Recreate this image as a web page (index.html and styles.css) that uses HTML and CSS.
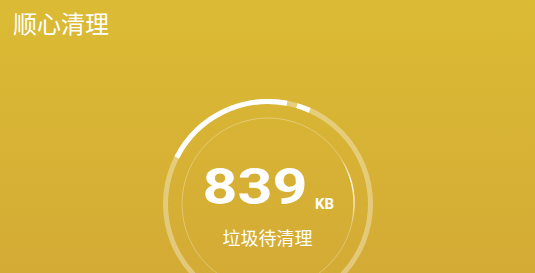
FILE: index.html
```html
<!DOCTYPE html>
<html lang="zh-CN">
<head>
<meta charset="utf-8">
<title>顺心清理</title>
<link rel="stylesheet" href="styles.css">
</head>
<body>
<div class="page">
  <header class="header">顺心清理</header>
  <main class="gauge">
    <svg class="rings" viewBox="0 0 210 210" width="210" height="210">
      <defs>
        <linearGradient id="glow" gradientUnits="userSpaceOnUse" x1="0" y1="58" x2="0" y2="126">
          <stop offset="0" stop-color="#fff" stop-opacity="0"/>
          <stop offset="0.35" stop-color="#fff" stop-opacity="0.85"/>
          <stop offset="0.7" stop-color="#fff" stop-opacity="0.6"/>
          <stop offset="1" stop-color="#fff" stop-opacity="0"/>
        </linearGradient>
      </defs>
      <circle cx="105" cy="105" r="102.5" fill="none" stroke="#fff" stroke-opacity="0.35" stroke-width="5"/>
      <path d="M13.7 58.5 A102.5 102.5 0 0 1 124 4.3" fill="none" stroke="#fff" stroke-width="5"/>
      <path d="M133.9 6.7 A102.5 102.5 0 0 1 146.7 11.4" fill="none" stroke="#fff" stroke-width="5"/>
      <circle cx="105" cy="105" r="86" fill="none" stroke="#fff" stroke-opacity="0.3" stroke-width="1"/>
      <path d="M178.7 60.7 A86 86 0 0 1 188.8 124.4" fill="none" stroke="url(#glow)" stroke-width="1.4"/>
    </svg>
    <div class="readout">
      <div class="amount"><span class="num">839</span><span class="unit">KB</span></div>
      <div class="caption">垃圾待清理</div>
    </div>
  </main>
</div>
</body>
</html>
```
FILE: styles.css
```css
html, body {
  margin: 0;
  padding: 0;
  width: 535px;
  height: 273px;
  overflow: hidden;
}
body {
  background: linear-gradient(180deg, #dbbb34 0%, #d4ab35 100%);
  color: #fff;
  font-family: "Noto Sans CJK SC", "Noto Sans", sans-serif;
}
.page {
  display: flex;
  flex-direction: column;
}
.header {
  padding: 11px 0 0 13px;
  font-size: 24px;
  line-height: 24px;
  font-weight: 400;
}
.gauge {
  margin: 64px auto 0;
  width: 210px;
  height: 210px;
  display: grid;
}
.rings, .readout {
  grid-area: 1 / 1;
}
.rings {
  display: block;
}
.readout {
  display: flex;
  flex-direction: column;
  align-items: center;
  padding-top: 63px;
}
.amount {
  display: flex;
  align-items: baseline;
  justify-content: center;
  height: 50px;
  font-family: Roboto, "Liberation Sans", sans-serif;
  font-weight: 700;
  padding-left: 1px;
}
.num {
  display: inline-block;
  font-size: 50px;
  line-height: 50px;
  transform: scaleX(1.22);
  margin: 0 10px;
}
.unit {
  font-size: 15px;
  line-height: 15px;
  margin-left: 7px;
  position: relative;
  top: 5px;
}
.caption {
  margin-top: 16px;
  font-size: 18px;
  line-height: 18px;
  font-weight: 400;
}
```
